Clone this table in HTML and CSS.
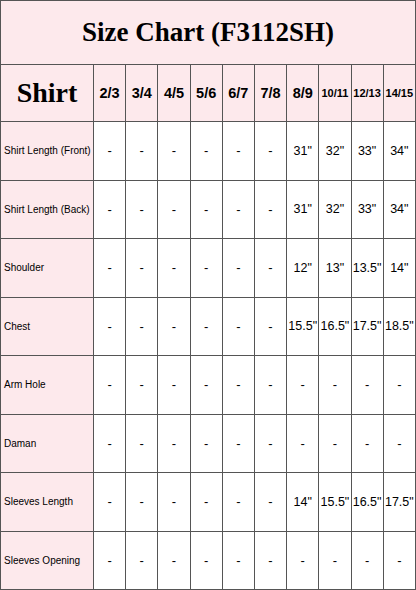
FILE: index.html
```html
<!DOCTYPE html>
<html>
<head>
<meta charset="utf-8">
<link rel="stylesheet" href="styles.css">
</head>
<body>
<table class="chart">
  <colgroup>
    <col class="col-label">
    <col span="10">
  </colgroup>
  <tr class="title-row"><td colspan="11" class="title">Size Chart (F3112SH)</td></tr>
  <tr class="head-row">
    <td class="shirt">Shirt</td>
    <td class="size">2/3</td><td class="size">3/4</td><td class="size">4/5</td><td class="size">5/6</td><td class="size">6/7</td><td class="size">7/8</td><td class="size">8/9</td><td class="size small">10/11</td><td class="size small">12/13</td><td class="size small">14/15</td>
  </tr>
  <tr class="row"><td class="label">Shirt Length (Front)</td><td>-</td><td>-</td><td>-</td><td>-</td><td>-</td><td>-</td><td class="val">31"</td><td class="val">32"</td><td class="val">33"</td><td class="val">34"</td></tr>
  <tr class="row"><td class="label">Shirt Length (Back)</td><td>-</td><td>-</td><td>-</td><td>-</td><td>-</td><td>-</td><td class="val">31"</td><td class="val">32"</td><td class="val">33"</td><td class="val">34"</td></tr>
  <tr class="row"><td class="label">Shoulder</td><td>-</td><td>-</td><td>-</td><td>-</td><td>-</td><td>-</td><td class="val">12"</td><td class="val">13"</td><td class="val">13.5"</td><td class="val">14"</td></tr>
  <tr class="row"><td class="label">Chest</td><td>-</td><td>-</td><td>-</td><td>-</td><td>-</td><td>-</td><td class="val">15.5"</td><td class="val">16.5"</td><td class="val">17.5"</td><td class="val">18.5"</td></tr>
  <tr class="row"><td class="label">Arm Hole</td><td>-</td><td>-</td><td>-</td><td>-</td><td>-</td><td>-</td><td>-</td><td>-</td><td>-</td><td>-</td></tr>
  <tr class="row"><td class="label">Daman</td><td>-</td><td>-</td><td>-</td><td>-</td><td>-</td><td>-</td><td>-</td><td>-</td><td>-</td><td>-</td></tr>
  <tr class="row"><td class="label">Sleeves Length</td><td>-</td><td>-</td><td>-</td><td>-</td><td>-</td><td>-</td><td class="val">14"</td><td class="val">15.5"</td><td class="val">16.5"</td><td class="val">17.5"</td></tr>
  <tr class="row"><td class="label">Sleeves Opening</td><td>-</td><td>-</td><td>-</td><td>-</td><td>-</td><td>-</td><td>-</td><td>-</td><td>-</td><td>-</td></tr>
</table>
</body>
</html>
```
FILE: styles.css
```css
html, body {
  margin: 0;
  padding: 0;
  background: #ffffff;
}

.chart {
  width: 416px;
  table-layout: fixed;
  border-collapse: collapse;
  font-family: "Liberation Sans", Arial, sans-serif;
  color: #000;
}

.col-label {
  width: 93px;
}

.chart td {
  border: 1px solid #555555;
  padding: 0;
  text-align: center;
  vertical-align: middle;
  font-size: 13px;
  white-space: nowrap;
  overflow: hidden;
}

.title-row {
  height: 64px;
}

.chart .title {
  background: #fde9ec;
  font-family: "Liberation Serif", "Times New Roman", serif;
  font-weight: bold;
  font-size: 27px;
}

.head-row {
  height: 57px;
}

.chart .head-row td {
  background: #fde9ec;
}

.chart .shirt {
  font-family: "Liberation Serif", "Times New Roman", serif;
  font-weight: bold;
  font-size: 28px;
}

.chart .size {
  font-weight: bold;
  font-size: 14.5px;
}

.chart .size.small {
  font-size: 11px;
}

.row {
  height: 58.5px;
}

.chart .label {
  background: #fde9ec;
  text-align: left;
  padding-left: 3px;
  font-size: 10px;
}

.chart .val {
  font-size: 12.5px;
}
```
